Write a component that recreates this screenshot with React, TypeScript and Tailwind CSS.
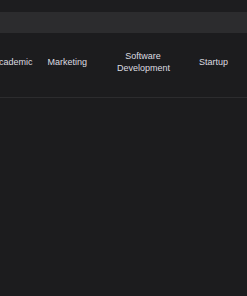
export default function App() {
  const tabs = ['Academic', 'Marketing', 'Software Development', 'Startup'];
  return (
    <div className="w-[247px] h-[296px] overflow-hidden bg-[#1c1c1e] font-['Liberation_Sans',Arial,sans-serif]">
      <div className="h-[12px] bg-[#1d1d1f]" />
      <div className="h-[21px] bg-[#2c2c2e]" />
      {/* category tabs */}
      <div className="h-[65px] flex items-center pb-[7px] border-b border-[#2c2c2e] overflow-hidden">
        <div className="flex items-center ml-[-7px] text-[9px] leading-[12px] font-medium text-[#dcdce0] whitespace-nowrap">
          <span>{tabs[0]}</span>
          <span className="ml-[15px]">{tabs[1]}</span>
          <span className="ml-[30px] w-[52px] text-center whitespace-normal">{tabs[2]}</span>
          <span className="ml-[30px]">{tabs[3]}</span>
        </div>
      </div>
    </div>
  );
}
